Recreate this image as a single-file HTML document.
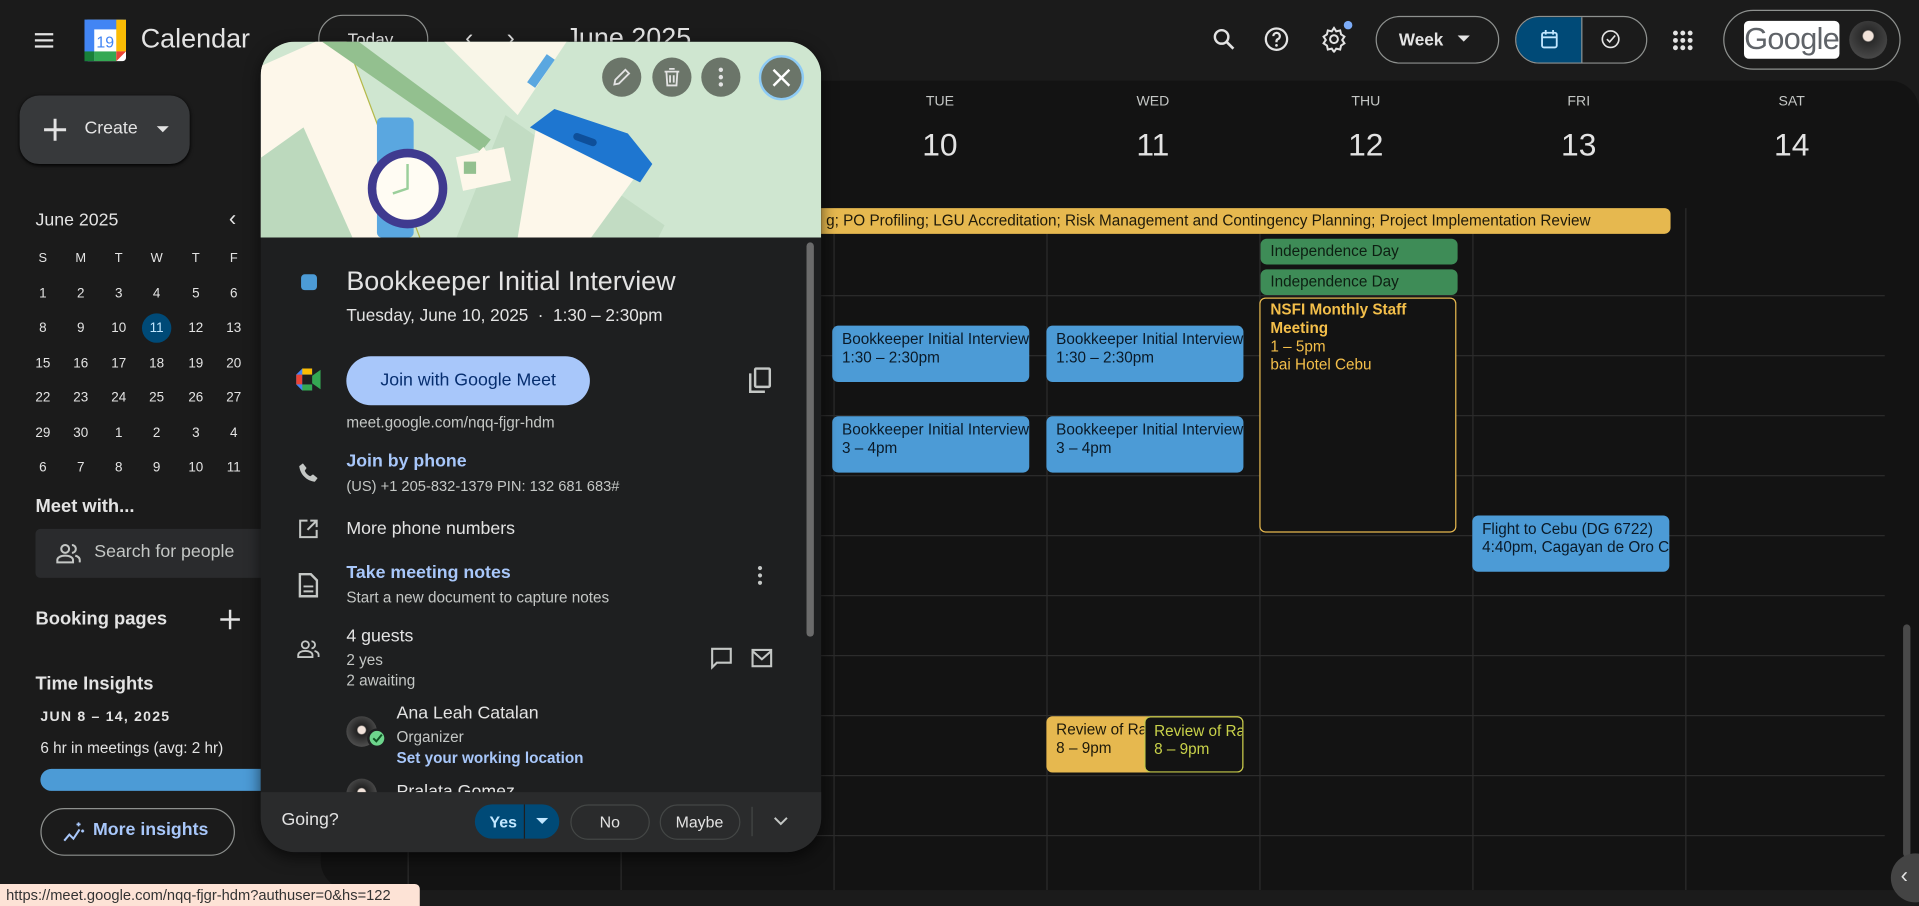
<!DOCTYPE html>
<html><head><meta charset="utf-8"><style>
*{box-sizing:border-box;margin:0;padding:0}
html,body{width:1919px;height:906px;overflow:hidden;background:#1b1b1b}
#w{position:absolute;left:0;top:0;width:1568px;height:740px;transform:scale(1.22385,1.22432);transform-origin:0 0;background:#1b1b1b;font-family:"Liberation Sans",sans-serif;color:#e3e3e3}
.a{position:absolute;white-space:nowrap}
.ev{position:absolute;border-radius:5px;background:#4c9bd6;color:#0a1a28;font-size:12.5px;line-height:15px;padding:4px 8px;overflow:hidden;white-space:nowrap}
.hl{position:absolute;left:333px;width:1207px;height:1px;background:#2c2c2c}
.vl{position:absolute;top:170px;height:557px;width:1px;background:#2c2c2c}
.dn{position:absolute;width:174px;text-align:center;font-size:11.5px;color:#c4c7c5;top:77px}
.dd{position:absolute;width:174px;text-align:center;font-size:26px;color:#e3e3e3;top:103px}
.mc{position:absolute;width:24px;text-align:center;font-size:11px;color:#e3e3e3}
.ic{position:absolute}
.pill{position:absolute;border:1px solid #8e918f;border-radius:20px}
.gray{color:#c4c7c5}
</style></head><body><div id="w">

<!-- top bar -->
<svg class="ic" style="left:26px;top:23px" width="20" height="20" viewBox="0 0 24 24"><path d="M3 6h18M3 12h18M3 18h18" stroke="#e3e3e3" stroke-width="2.2"/></svg>
<svg class="ic" style="left:69px;top:16px" width="34" height="34" viewBox="0 0 34 34"><rect x="0" y="0" width="34" height="34" rx="3" fill="#fff"/><rect x="0" y="0" width="34" height="8" fill="#4285f4"/><rect x="0" y="0" width="8" height="34" fill="#4285f4"/><rect x="26" y="0" width="8" height="26" fill="#fbbc04"/><rect x="8" y="26" width="18" height="8" fill="#34a853"/><path d="M26 26h8l-8 8z" fill="#ea4335"/><rect x="0" y="26" width="8" height="8" fill="#188038"/><text x="17" y="23" font-size="13" text-anchor="middle" fill="#4285f4" font-family="Liberation Sans">19</text></svg>
<div class="a" style="left:115px;top:19px;font-size:22px">Calendar</div>
<div class="pill" style="left:260px;top:12px;width:90px;height:40px"></div>
<div class="a" style="left:284px;top:24px;font-size:14px">Today</div>
<div class="a" style="left:380px;top:20px;font-size:20px">‹</div><div class="a" style="left:414px;top:20px;font-size:20px">›</div>
<div class="a" style="left:462px;top:18px;font-size:22px">June 2025</div>

<svg class="ic" style="left:989px;top:21px" width="22" height="22" viewBox="0 0 24 24"><circle cx="10" cy="10" r="6" fill="none" stroke="#e3e3e3" stroke-width="2.2"/><path d="M14.5 14.5l6 6" stroke="#e3e3e3" stroke-width="2.4"/></svg>
<svg class="ic" style="left:1032px;top:21px" width="22" height="22" viewBox="0 0 24 24"><circle cx="12" cy="12" r="9.5" fill="none" stroke="#e3e3e3" stroke-width="2"/><path d="M9.2 9.3a2.9 2.9 0 1 1 4 2.7c-.9.4-1.2 1-1.2 2v.7" fill="none" stroke="#e3e3e3" stroke-width="2"/><circle cx="12" cy="17.5" r="1.2" fill="#e3e3e3"/></svg>
<svg class="ic" style="left:1079px;top:21px" width="22" height="22" viewBox="0 0 24 24"><path d="M12 2l2 3 3.5-.8.8 3.5 3 2-2 3 2 3-3 2-.8 3.5-3.5-.8-2 3-2-3-3.5.8-.8-3.5-3-2 2-3-2-3 3-2 .8-3.5 3.5.8z" fill="none" stroke="#e3e3e3" stroke-width="1.8"/><circle cx="12" cy="12" r="3.5" fill="none" stroke="#e3e3e3" stroke-width="1.8"/></svg>
<div class="a" style="left:1098px;top:17px;width:7px;height:7px;border-radius:50%;background:#7cacf8"></div>
<div class="pill" style="left:1124px;top:13px;width:101px;height:39px"></div>
<div class="a" style="left:1143px;top:24px;font-size:14px;font-weight:bold">Week</div>
<svg class="ic" style="left:1191px;top:29px" width="10" height="6"><path d="M0 0h10L5 5z" fill="#e3e3e3"/></svg>
<div class="a" style="left:1238px;top:13px;width:108px;height:39px;border:1px solid #8e918f;border-radius:20px;overflow:hidden"><div style="width:54px;height:39px;background:#004a77;border-right:1px solid #8e918f"></div></div>
<svg class="ic" style="left:1257px;top:23px" width="18" height="18" viewBox="0 0 24 24"><rect x="4" y="5" width="16" height="16" rx="2" fill="none" stroke="#c2e7ff" stroke-width="2"/><path d="M4 10h16M8 2v5M16 2v5" stroke="#c2e7ff" stroke-width="2"/></svg>
<svg class="ic" style="left:1307px;top:23px" width="18" height="18" viewBox="0 0 24 24"><circle cx="12" cy="12" r="9" fill="none" stroke="#e3e3e3" stroke-width="1.8"/><path d="M8 12l3 3 6-7" fill="none" stroke="#e3e3e3" stroke-width="1.8"/></svg>
<svg class="ic" style="left:1366px;top:24px" width="18" height="18" viewBox="0 0 18 18" fill="#e3e3e3"><circle cx="3" cy="3" r="2"/><circle cx="9" cy="3" r="2"/><circle cx="15" cy="3" r="2"/><circle cx="3" cy="9" r="2"/><circle cx="9" cy="9" r="2"/><circle cx="15" cy="9" r="2"/><circle cx="3" cy="15" r="2"/><circle cx="9" cy="15" r="2"/><circle cx="15" cy="15" r="2"/></svg>
<div class="pill" style="left:1408px;top:8px;width:145px;height:49px;border-radius:25px"></div>
<div class="a" style="left:1425px;top:17px;width:78px;height:31px;background:#fff;border-radius:4px;color:#5f6368;font-size:25px;line-height:31px;text-align:center;letter-spacing:-.5px">Google</div>
<div class="a" style="left:1511px;top:17px;width:31px;height:31px;border-radius:50%;background:radial-gradient(circle at 50% 40%,#f1e3da 0 4px,#2a2a2a 5px,#555 100%)"></div>

<!-- sidebar -->
<div class="a" style="left:16px;top:78px;width:139px;height:56px;border-radius:16px;background:#37393b;box-shadow:0 1px 3px #000"></div>
<svg class="ic" style="left:34px;top:95px" width="22" height="22"><path d="M11 2v18M2 11h18" stroke="#e3e3e3" stroke-width="2.4"/></svg>
<div class="a" style="left:69px;top:97px;font-size:14.5px">Create</div>
<svg class="ic" style="left:128px;top:103px" width="10" height="6"><path d="M0 0h10L5 5z" fill="#e3e3e3"/></svg>
<div class="a" style="left:29px;top:172px;font-size:14.5px">June 2025</div>
<div class="a" style="left:187px;top:168px;font-size:18px">‹</div>
<div class="a" style="left:116px;top:256px;width:24px;height:24px;border-radius:50%;background:#004a77"></div>
<div id="mini"></div>

<div class="a" style="left:29px;top:405px;font-size:15px;font-weight:bold">Meet with...</div>
<div class="a" style="left:29px;top:432px;width:190px;height:40px;background:#2a2b2d;border-radius:4px 0 0 4px"></div>
<svg class="ic" style="left:45px;top:441px" width="22" height="22" viewBox="0 0 24 24"><circle cx="9" cy="8" r="3.5" fill="none" stroke="#c4c7c5" stroke-width="1.8"/><path d="M2 20v-2c0-2.5 3-4 7-4s7 1.5 7 4v2zM15 4.5a3.5 3.5 0 0 1 0 7M18 14c2 .6 4 1.8 4 4v2" fill="none" stroke="#c4c7c5" stroke-width="1.8"/></svg>
<div class="a gray" style="left:77px;top:443px;font-size:14.5px">Search for people</div>
<div class="a" style="left:29px;top:497px;font-size:15px;font-weight:bold">Booking pages</div>
<svg class="ic" style="left:179px;top:497px" width="18" height="18"><path d="M9 1v16M1 9h16" stroke="#e3e3e3" stroke-width="2"/></svg>
<div class="a" style="left:29px;top:550px;font-size:15px;font-weight:bold">Time Insights</div>
<div class="a" style="left:33px;top:580px;font-size:11.5px;font-weight:bold;letter-spacing:1px">JUN 8 – 14, 2025</div>
<div class="a" style="left:33px;top:604px;font-size:12.5px">6 hr in meetings (avg: 2 hr)</div>
<div class="a" style="left:33px;top:628px;width:190px;height:18px;border-radius:9px 0 0 9px;background:#4c9bd6"></div>
<div class="pill" style="left:33px;top:660px;width:159px;height:39px"></div>
<svg class="ic" style="left:50px;top:670px" width="20" height="20" viewBox="0 0 24 24"><path d="M3 20l5-6 4 4 6-9" fill="none" stroke="#a8c7fa" stroke-width="2"/><path d="M17 2v4M15 4h4M21 9v3M19.5 10.5h3" stroke="#a8c7fa" stroke-width="1.6"/></svg>
<div class="a" style="left:76px;top:670px;font-size:14.5px;color:#a8c7fa;font-weight:bold">More insights</div>

<!-- main panel -->
<div class="a" style="left:262px;top:66px;width:1306px;height:661px;background:#131313;border-radius:24px 24px 0 24px"></div>
<div class="dn" style="left:681px">TUE</div><div class="dd" style="left:681px">10</div>
<div class="dn" style="left:855px">WED</div><div class="dd" style="left:855px">11</div>
<div class="dn" style="left:1029px">THU</div><div class="dd" style="left:1029px">12</div>
<div class="dn" style="left:1203px">FRI</div><div class="dd" style="left:1203px">13</div>
<div class="dn" style="left:1377px">SAT</div><div class="dd" style="left:1377px">14</div>
<div class="hl" style="top:241px"></div><div class="hl" style="top:290px"></div><div class="hl" style="top:339px"></div><div class="hl" style="top:388px"></div><div class="hl" style="top:437px"></div><div class="hl" style="top:486px"></div><div class="hl" style="top:535px"></div><div class="hl" style="top:584px"></div><div class="hl" style="top:633px"></div><div class="hl" style="top:682px"></div>
<div class="vl" style="left:333px"></div><div class="vl" style="left:507px"></div><div class="vl" style="left:681px"></div><div class="vl" style="left:855px"></div><div class="vl" style="left:1029px"></div><div class="vl" style="left:1203px"></div><div class="vl" style="left:1377px"></div>

<div class="ev" style="left:600px;top:170px;width:765px;height:21px;background:#e6b84f;padding:3px 8px 0 75px;font-size:12.5px;color:#1f1a0a">g; PO Profiling; LGU Accreditation; Risk Management and Contingency Planning; Project Implementation Review</div>
<div class="ev" style="left:1030px;top:195px;width:161px;height:21px;background:#3e8c57;padding:3px 8px;color:#0d1f12">Independence Day</div>
<div class="ev" style="left:1030px;top:220px;width:161px;height:21px;background:#3e8c57;padding:3px 8px;color:#0d1f12">Independence Day</div>
<div class="ev" style="left:680px;top:266px;width:161px;height:46px">Bookkeeper Initial Interview<br>1:30 – 2:30pm</div>
<div class="ev" style="left:855px;top:266px;width:161px;height:46px">Bookkeeper Initial Interview<br>1:30 – 2:30pm</div>
<div class="ev" style="left:680px;top:340px;width:161px;height:46px">Bookkeeper Initial Interview<br>3 – 4pm</div>
<div class="ev" style="left:855px;top:340px;width:161px;height:46px">Bookkeeper Initial Interview<br>3 – 4pm</div>
<div class="ev" style="left:1029px;top:243px;width:161px;height:192px;background:#131313;border:1px solid #e6b84f;color:#f4bf4a;font-weight:bold;white-space:normal;line-height:15px;padding:2px 8px">NSFI Monthly Staff Meeting<br><span style="font-weight:normal">1 – 5pm<br>bai Hotel Cebu</span></div>
<div class="ev" style="left:1203px;top:421px;width:161px;height:46px">Flight to Cebu (DG 6722)<br>4:40pm, Cagayan de Oro C</div>
<div class="ev" style="left:855px;top:585px;width:161px;height:46px;background:#e6b84f;color:#1f1a0a">Review of Ra<br>8 – 9pm</div>
<div class="ev" style="left:935px;top:585px;width:81px;height:46px;background:#131313;border:1px solid #c5c94a;color:#c9d24a;padding:4px 7px">Review of Ra<br>8 – 9pm</div>
<div class="a" style="left:1555px;top:510px;width:6px;height:190px;border-radius:3px;background:#4a4a4a"></div>
<div class="a" style="left:1545px;top:697px;width:40px;height:40px;border-radius:20px;background:#444"></div>
<div class="a" style="left:1553px;top:705px;font-size:18px">‹</div>

<!-- popup -->
<div class="a" style="left:213px;top:34px;width:458px;height:662px;border-radius:28px;background:#1e1f20;overflow:hidden;box-shadow:0 4px 12px rgba(0,0,0,.6)">
<svg width="458" height="160" viewBox="0 0 458 160" style="display:block">
<rect width="458" height="160" fill="#cfe6d0"/>
<path d="M0 20L45 0h25l55 150-20 10H0z" fill="#fdf7ea"/><path d="M70 0l60 160" stroke="#b5b94a" stroke-width="1"/>
<path d="M0 95l35-25 40 90H0z" fill="#bcd9bd"/>
<path d="M50 0l130 90 8-10L80 0z" fill="#93c08f"/><path d="M178 90l12 8-8-12z" fill="#fdf7ea"/>
<path d="M150 0l60 60 40-60z" fill="#fdf7ea" opacity=".9"/><rect x="225" y="10" width="8" height="28" transform="rotate(35 229 24)" fill="#5aa7e0"/>
<path d="M200 60l130 90-5 10H160z" fill="#b9d6bb" opacity=".6"/>
<rect x="95" y="62" width="30" height="98" rx="4" fill="#5aa7e0"/>
<circle cx="118" cy="110" r="22" fill="#b5b94a"/>
<circle cx="120" cy="120" r="29" fill="#fffcf3" stroke="#3f3a8f" stroke-width="7"/>
<path d="M120 100v20l-12 4" stroke="#9bcf9b" stroke-width="2" fill="none"/>
<rect x="162" y="90" width="40" height="28" fill="#fdf7ea" transform="rotate(-12 182 104)"/><rect x="166" y="98" width="10" height="10" fill="#93c08f"/>
<path d="M225 70l55 5 30 30-40 55h-60z" fill="#fdf7ea"/>
<path d="M220 70l20-15 60 20 20 25-10 15z" fill="#1e76d0"/><rect x="255" y="77" width="20" height="6" rx="3" fill="#0e4f9a" transform="rotate(20 265 80)"/>
</svg>
</div>
<div class="a" style="left:492px;top:47px;width:32px;height:32px;border-radius:50%;background:#6b7569"></div>
<svg class="ic" style="left:499px;top:54px" width="18" height="18" viewBox="0 0 24 24"><path d="M4 20l1-5L16 4l4 4L9 19z" fill="none" stroke="#e3e3e3" stroke-width="2"/></svg>
<div class="a" style="left:533px;top:47px;width:32px;height:32px;border-radius:50%;background:#6b7569"></div>
<svg class="ic" style="left:540px;top:54px" width="18" height="18" viewBox="0 0 24 24"><path d="M4 6h16M9 3h6M6 6l1 15h10l1-15M10 10v8M14 10v8" fill="none" stroke="#e3e3e3" stroke-width="2"/></svg>
<div class="a" style="left:573px;top:47px;width:32px;height:32px;border-radius:50%;background:#6b7569"></div>
<svg class="ic" style="left:586px;top:55px" width="6" height="16"><circle cx="3" cy="2" r="1.8" fill="#e3e3e3"/><circle cx="3" cy="8" r="1.8" fill="#e3e3e3"/><circle cx="3" cy="14" r="1.8" fill="#e3e3e3"/></svg>
<div class="a" style="left:620px;top:45px;width:37px;height:37px;border-radius:50%;background:#6b7569;border:2.5px solid #8ecbf5"></div>
<svg class="ic" style="left:630px;top:55px" width="17" height="17"><path d="M2 2l13 13M15 2L2 15" stroke="#fff" stroke-width="2"/></svg>

<div class="a" style="left:246px;top:224px;width:13px;height:13px;border-radius:3px;background:#4c9bd6"></div>
<div class="a" style="left:283px;top:217px;font-size:22px">Bookkeeper Initial Interview</div>
<div class="a" style="left:283px;top:249px;font-size:14px">Tuesday, June 10, 2025 &nbsp;·&nbsp; 1:30 – 2:30pm</div>
<svg class="ic" style="left:242px;top:301px" width="20" height="18" viewBox="0 0 20 18"><path d="M0 5L5 0h8v18H5l-5-5z" fill="#4285f4"/><path d="M0 5h5v8H0z" fill="#ea4335"/><path d="M5 0h8v5H5z" fill="#fbbc04"/><path d="M5 13h8v5H5z" fill="#34a853"/><path d="M13 6l7-5v16l-7-5z" fill="#34a853"/><rect x="5" y="5" width="8" height="8" fill="#1e1f20"/></svg>
<div class="a" style="left:283px;top:291px;width:199px;height:40px;border-radius:20px;background:#a8c7fa;color:#062e6f;font-size:14.5px;line-height:40px;text-align:center">Join with Google Meet</div>
<svg class="ic" style="left:611px;top:300px" width="20" height="22" viewBox="0 0 20 22"><rect x="6" y="1" width="12" height="15" rx="1" fill="none" stroke="#c4c7c5" stroke-width="2"/><path d="M2 5v15h12" fill="none" stroke="#c4c7c5" stroke-width="2"/></svg>
<div class="a gray" style="left:283px;top:338px;font-size:12.5px">meet.google.com/nqq-fjgr-hdm</div>
<svg class="ic" style="left:243px;top:377px" width="18" height="18" viewBox="0 0 24 24"><path d="M6 2l4 5-2 3c1.5 3 3 4.5 6 6l3-2 5 4-3 4C10 21 3 14 2 5z" fill="#c4c7c5"/></svg>
<div class="a" style="left:283px;top:369px;font-size:14.5px;color:#a8c7fa;font-weight:bold">Join by phone</div>
<div class="a gray" style="left:283px;top:390px;font-size:12px">(US) +1 205-832-1379 PIN: 132 681 683#</div>
<svg class="ic" style="left:243px;top:423px" width="18" height="18" viewBox="0 0 24 24"><path d="M11 3H3v18h18v-8M14 3h7v7M21 3L11 13" fill="none" stroke="#c4c7c5" stroke-width="2.2"/></svg>
<div class="a" style="left:283px;top:424px;font-size:14.5px">More phone numbers</div>
<svg class="ic" style="left:244px;top:468px" width="16" height="20" viewBox="0 0 16 20"><path d="M1 1h9l5 5v13H1z" fill="none" stroke="#c4c7c5" stroke-width="2"/><path d="M4 11h8M4 15h8" stroke="#c4c7c5" stroke-width="1.6"/></svg>
<div class="a" style="left:283px;top:460px;font-size:14.5px;color:#a8c7fa;font-weight:bold">Take meeting notes</div>
<div class="a gray" style="left:283px;top:481px;font-size:12.5px">Start a new document to capture notes</div>
<svg class="ic" style="left:618px;top:462px" width="6" height="16"><circle cx="3" cy="2" r="1.7" fill="#c4c7c5"/><circle cx="3" cy="8" r="1.7" fill="#c4c7c5"/><circle cx="3" cy="14" r="1.7" fill="#c4c7c5"/></svg>
<svg class="ic" style="left:242px;top:520px" width="20" height="20" viewBox="0 0 24 24"><circle cx="9" cy="8" r="3.5" fill="none" stroke="#c4c7c5" stroke-width="1.8"/><path d="M2 20v-2c0-2.5 3-4 7-4s7 1.5 7 4v2zM15 4.5a3.5 3.5 0 0 1 0 7M18 14c2 .6 4 1.8 4 4v2" fill="none" stroke="#c4c7c5" stroke-width="1.8"/></svg>
<div class="a" style="left:283px;top:512px;font-size:14.5px">4 guests</div>
<div class="a gray" style="left:283px;top:532px;font-size:12.5px">2 yes</div>
<div class="a gray" style="left:283px;top:549px;font-size:12.5px">2 awaiting</div>
<svg class="ic" style="left:580px;top:528px" width="19" height="19" viewBox="0 0 20 20"><path d="M2 2h16v12H6l-4 4z" fill="none" stroke="#c4c7c5" stroke-width="1.8"/></svg>
<svg class="ic" style="left:613px;top:528px" width="19" height="19" viewBox="0 0 20 20"><rect x="2" y="3" width="16" height="14" fill="none" stroke="#c4c7c5" stroke-width="1.8"/><path d="M2 4l8 7 8-7" fill="none" stroke="#c4c7c5" stroke-width="1.8"/></svg>
<div class="a" style="left:283px;top:585px;width:25px;height:25px;border-radius:50%;background:radial-gradient(circle at 50% 45%,#f1e3da 0 3px,#222 4px,#666 100%)"></div>
<div class="a" style="left:300px;top:595px;width:16px;height:16px;border-radius:50%;background:#6dd58c;border:2px solid #1e1f20"></div>
<svg class="ic" style="left:304px;top:599px" width="9" height="8"><path d="M1 4l2.5 2.5L8 1" stroke="#0f5223" stroke-width="1.6" fill="none"/></svg>
<div class="a" style="left:324px;top:575px;font-size:14.5px">Ana Leah Catalan</div>
<div class="a gray" style="left:324px;top:595px;font-size:12.5px">Organizer</div>
<div class="a" style="left:324px;top:612px;font-size:12.5px;color:#a8c7fa;font-weight:bold">Set your working location</div>
<div class="a" style="left:283px;top:636px;width:25px;height:25px;border-radius:50%;background:radial-gradient(circle at 50% 45%,#f1e3da 0 3px,#222 4px,#666 100%)"></div>
<div class="a" style="left:324px;top:639px;font-size:14.5px">Pralata Gomez</div>
<div class="a" style="left:659px;top:198px;width:6px;height:322px;border-radius:3px;background:#6b6b6b"></div>
<div class="a" style="left:213px;top:647px;width:458px;height:49px;background:#2a2b2c;border-radius:0 0 28px 28px"></div>
<div class="a" style="left:230px;top:662px;font-size:14.5px">Going?</div>
<div class="a" style="left:388px;top:657px;width:69px;height:28px;border-radius:14px;background:#004a77"></div>
<div class="a" style="left:428px;top:657px;width:1px;height:28px;background:#1e1f20"></div>
<div class="a" style="left:400px;top:664px;font-size:13px;color:#c2e7ff;font-weight:bold">Yes</div>
<svg class="ic" style="left:438px;top:668px" width="10" height="6"><path d="M0 0h10L5 5z" fill="#c2e7ff"/></svg>
<div class="pill" style="left:466px;top:657px;width:65px;height:29px;border-color:#444746"></div>
<div class="a" style="left:490px;top:664px;font-size:13px">No</div>
<div class="pill" style="left:539px;top:657px;width:66px;height:29px;border-color:#444746"></div>
<div class="a" style="left:552px;top:664px;font-size:13px">Maybe</div>
<div class="a" style="left:614px;top:659px;width:1px;height:24px;background:#444746"></div>
<svg class="ic" style="left:632px;top:667px" width="12" height="8"><path d="M1 1l5 5 5-5" stroke="#c4c7c5" stroke-width="1.6" fill="none"/></svg>

<div class="a" style="left:0;top:722px;width:343px;height:18px;background:#fde3d6;color:#333;font-size:12px;line-height:18px;padding-left:5px;border-radius:0 4px 0 0">https://meet.google.com/nqq-fjgr-hdm?authuser=0&amp;hs=122</div>
</div>
<script>
var m=document.getElementById('mini'),h='';
var L=['S','M','T','W','T','F'],xs=[35,66,97,128,160,191],ys=[211,240,268,297,325,354,382];
var rows=[L,[1,2,3,4,5,6],[8,9,10,11,12,13],[15,16,17,18,19,20],[22,23,24,25,26,27],[29,30,1,2,3,4],[6,7,8,9,10,11]];
for(var r=0;r<7;r++)for(var c=0;c<6;c++){h+='<div class="mc" style="left:'+(xs[c]-12)+'px;top:'+(ys[r]-6)+'px;'+(r==0?'font-size:10.5px;':'')+((r==2&&c==3)?'color:#c2e7ff;':'')+'">'+rows[r][c]+'</div>';}
m.innerHTML=h;
</script>
</body></html>
